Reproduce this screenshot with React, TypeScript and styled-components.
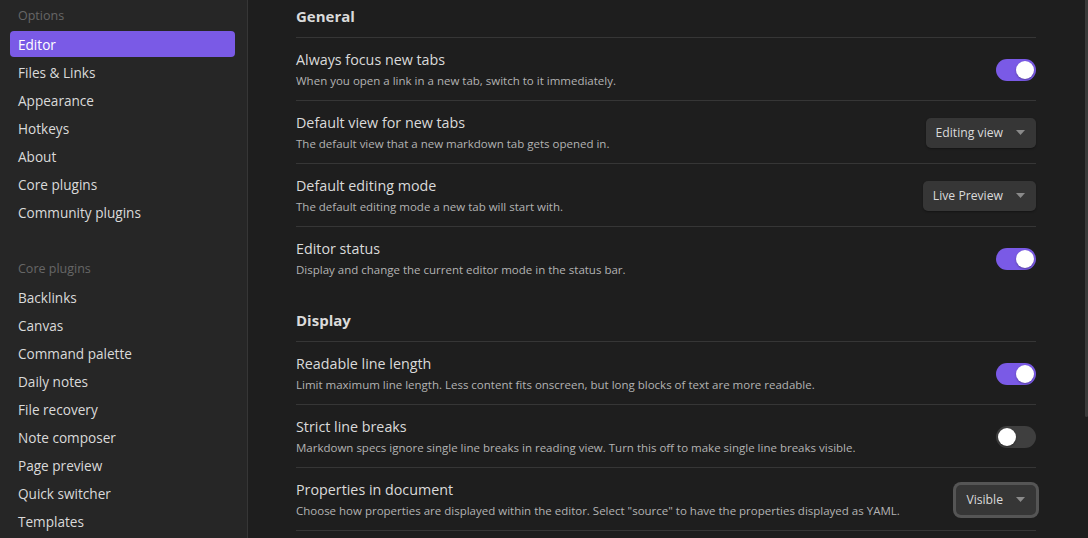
import React from 'react';
import styled, { createGlobalStyle } from 'styled-components';

const GlobalStyle = createGlobalStyle`
  html, body {
    margin: 0;
    padding: 0;
    background: #1e1e1e;
    overflow: hidden;
  }
  * {
    box-sizing: border-box;
  }
  body {
    font-family: "Open Sans", "Noto Sans", sans-serif;
    color: #dadada;
  }
`;

const Shell = styled.div`
  display: flex;
  height: 538px;
  overflow: hidden;
`;

const Sidebar = styled.nav`
  width: 248px;
  flex-shrink: 0;
  background: #262626;
  border-right: 1px solid #363636;
  padding: 7px 12px 0 10px;
`;

const NavGroup = styled.div`
  display: flex;
  flex-direction: column;
  gap: 2px;
  & + & {
    margin-top: 35px;
  }
`;

const NavGroupTitle = styled.div`
  font-size: 12.5px;
  line-height: 18px;
  color: #666666;
  padding-left: 8px;
  margin-bottom: 4px;
`;

const NavItem = styled.div<{ $active?: boolean }>`
  height: 26px;
  display: flex;
  align-items: center;
  padding: 0 8px;
  border-radius: 4px;
  font-size: 13.6px;
  color: ${(p) => (p.$active ? '#ffffff' : '#dadada')};
  background: ${(p) => (p.$active ? '#7a5ae6' : 'transparent')};
`;

const Main = styled.main`
  flex: 1;
  position: relative;
  overflow: hidden;
  padding: 0 52px 0 48px;
`;

const ScrollThumb = styled.div`
  position: absolute;
  top: 0;
  right: 0;
  width: 3px;
  height: 417px;
  background: #3a3a3a;
  border-radius: 0 0 2px 2px;
`;

const Section = styled.section<{ $ruled?: boolean }>`
  border-bottom: ${(p) => (p.$ruled ? '1px solid #363636' : 'none')};
`;

const SectionHeading = styled.div<{ $first?: boolean }>`
  font-size: 15px;
  font-weight: 700;
  line-height: 22px;
  color: #dadada;
  padding: ${(p) => (p.$first ? '5px' : '20px')} 0 10px;
`;

const SettingRow = styled.div`
  display: flex;
  align-items: center;
  gap: 20px;
  border-top: 1px solid #363636;
  padding: 11px 0 10px;
`;

const SettingInfo = styled.div`
  flex: 1;
  min-width: 0;
`;

const SettingName = styled.div`
  font-size: 14.3px;
  line-height: 22px;
  color: #dadada;
`;

const SettingDesc = styled.div`
  font-size: 11.5px;
  line-height: 18px;
  color: #b3b3b3;
  margin-top: 1px;
`;

const ToggleTrack = styled.div<{ $on?: boolean }>`
  width: 40px;
  height: 22px;
  border-radius: 11px;
  padding: 2px;
  display: flex;
  justify-content: ${(p) => (p.$on ? 'flex-end' : 'flex-start')};
  background: ${(p) => (p.$on ? '#7a5ae6' : '#3f3f3f')};
  flex-shrink: 0;
`;

const ToggleKnob = styled.div`
  width: 18px;
  height: 18px;
  border-radius: 50%;
  background: #ffffff;
  box-shadow: 0 1px 2px rgba(0, 0, 0, 0.3);
`;

const Dropdown = styled.div<{ $focused?: boolean }>`
  height: 30px;
  display: flex;
  align-items: center;
  gap: 13px;
  padding: 0 11px 0 10px;
  border-radius: 5px;
  background: #363636;
  box-shadow: ${(p) =>
    p.$focused ? '0 0 0 3px #555555' : '0 1px 2px rgba(0, 0, 0, 0.35)'};
  font-size: 12.2px;
  color: #dadada;
  flex-shrink: 0;
`;

const Caret = () => (
  <svg width="9" height="5" viewBox="0 0 9 5">
    <path d="M0 0 L9 0 L4.5 5 Z" fill="#8a8a8a" />
  </svg>
);

type Control =
  | { kind: 'toggle'; on: boolean }
  | { kind: 'select'; value: string; focused?: boolean };

type Setting = { name: string; desc: string; control: Control };

const general: Setting[] = [
  {
    name: 'Always focus new tabs',
    desc: 'When you open a link in a new tab, switch to it immediately.',
    control: { kind: 'toggle', on: true },
  },
  {
    name: 'Default view for new tabs',
    desc: 'The default view that a new markdown tab gets opened in.',
    control: { kind: 'select', value: 'Editing view' },
  },
  {
    name: 'Default editing mode',
    desc: 'The default editing mode a new tab will start with.',
    control: { kind: 'select', value: 'Live Preview' },
  },
  {
    name: 'Editor status',
    desc: 'Display and change the current editor mode in the status bar.',
    control: { kind: 'toggle', on: true },
  },
];

const display: Setting[] = [
  {
    name: 'Readable line length',
    desc: 'Limit maximum line length. Less content fits onscreen, but long blocks of text are more readable.',
    control: { kind: 'toggle', on: true },
  },
  {
    name: 'Strict line breaks',
    desc: 'Markdown specs ignore single line breaks in reading view. Turn this off to make single line breaks visible.',
    control: { kind: 'toggle', on: false },
  },
  {
    name: 'Properties in document',
    desc: 'Choose how properties are displayed within the editor. Select "source" to have the properties displayed as YAML.',
    control: { kind: 'select', value: 'Visible', focused: true },
  },
];

const optionItems = [
  'Editor',
  'Files & Links',
  'Appearance',
  'Hotkeys',
  'About',
  'Core plugins',
  'Community plugins',
];

const pluginItems = [
  'Backlinks',
  'Canvas',
  'Command palette',
  'Daily notes',
  'File recovery',
  'Note composer',
  'Page preview',
  'Quick switcher',
  'Templates',
];

const SettingControl = ({ control }: { control: Control }) =>
  control.kind === 'toggle' ? (
    <ToggleTrack $on={control.on}>
      <ToggleKnob />
    </ToggleTrack>
  ) : (
    <Dropdown $focused={control.focused}>
      {control.value}
      <Caret />
    </Dropdown>
  );

const SettingList = ({ items }: { items: Setting[] }) => (
  <>
    {items.map((s) => (
      <SettingRow key={s.name}>
        <SettingInfo>
          <SettingName>{s.name}</SettingName>
          <SettingDesc>{s.desc}</SettingDesc>
        </SettingInfo>
        <SettingControl control={s.control} />
      </SettingRow>
    ))}
  </>
);

export default function App() {
  return (
    <>
      <GlobalStyle />
      <Shell>
        <Sidebar>
          <NavGroup>
            <NavGroupTitle>Options</NavGroupTitle>
            {optionItems.map((item) => (
              <NavItem key={item} $active={item === 'Editor'}>
                {item}
              </NavItem>
            ))}
          </NavGroup>
          <NavGroup>
            <NavGroupTitle>Core plugins</NavGroupTitle>
            {pluginItems.map((item) => (
              <NavItem key={item}>{item}</NavItem>
            ))}
          </NavGroup>
        </Sidebar>
        <Main>
          <Section>
            <SectionHeading $first>General</SectionHeading>
            <SettingList items={general} />
          </Section>
          <Section $ruled>
            <SectionHeading>Display</SectionHeading>
            <SettingList items={display} />
          </Section>
          <ScrollThumb />
        </Main>
      </Shell>
    </>
  );
}
